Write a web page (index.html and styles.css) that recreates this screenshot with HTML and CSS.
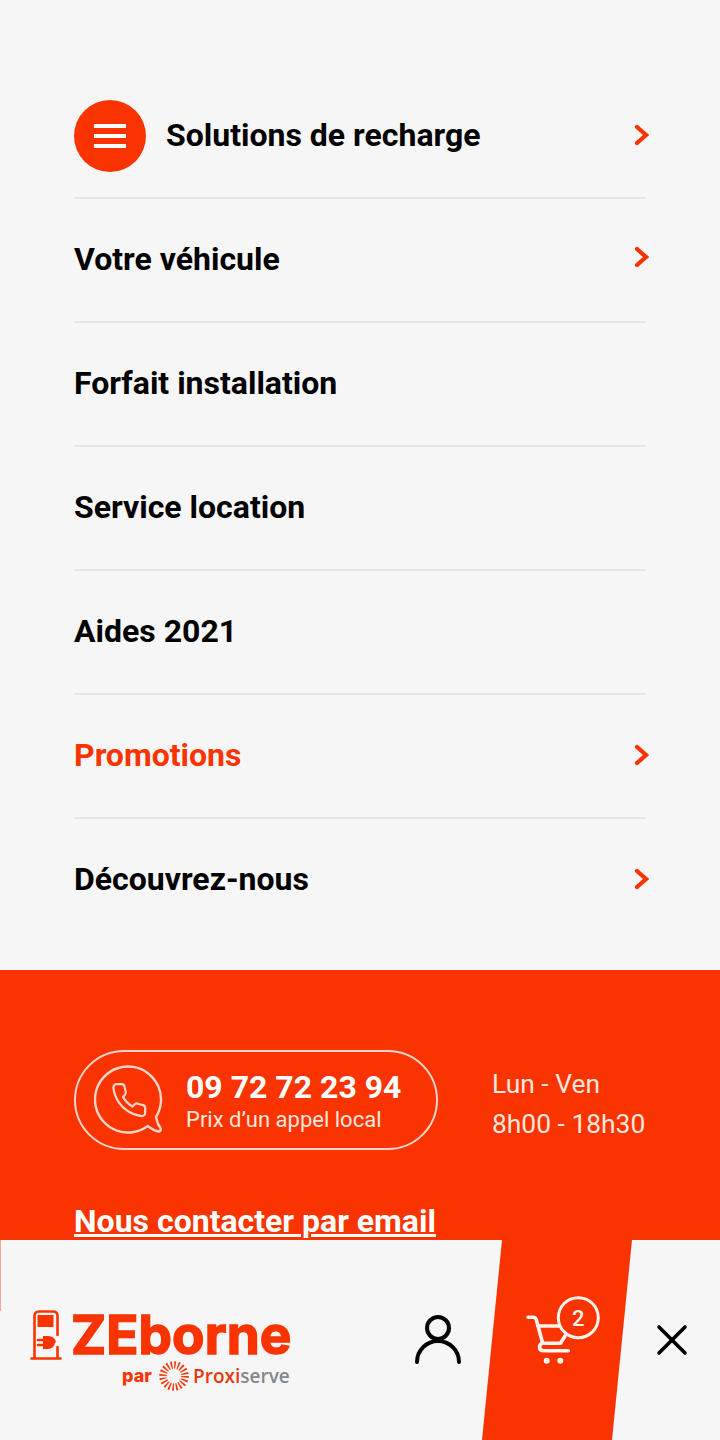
FILE: index.html
```html
<!DOCTYPE html>
<html lang="fr">
<head>
    <meta charset="UTF-8">
    <meta name="viewport" content="width=device-width, initial-scale=1.0">
    <title>ZEborne - Menu</title>
    <link rel="stylesheet" href="styles.css">
</head>
<body>
    <nav class="menu">
        <a href="#" class="menu-row">
            <span class="burger"><i></i><i></i><i></i></span>
            <span class="menu-label">Solutions de recharge</span>
            <svg class="chevron" viewBox="0 0 16 22"><path d="M4 3l9 8-9 8"/></svg>
        </a>
        <a href="#" class="menu-row">
            <span class="menu-label">Votre véhicule</span>
            <svg class="chevron chevron-up" viewBox="0 0 16 22"><path d="M4 3l9 8-9 8"/></svg>
        </a>
        <a href="#" class="menu-row"><span class="menu-label">Forfait installation</span></a>
        <a href="#" class="menu-row"><span class="menu-label">Service location</span></a>
        <a href="#" class="menu-row"><span class="menu-label">Aides 2021</span></a>
        <a href="#" class="menu-row promo">
            <span class="menu-label">Promotions</span>
            <svg class="chevron" viewBox="0 0 16 22"><path d="M4 3l9 8-9 8"/></svg>
        </a>
        <a href="#" class="menu-row">
            <span class="menu-label">Découvrez-nous</span>
            <svg class="chevron" viewBox="0 0 16 22"><path d="M4 3l9 8-9 8"/></svg>
        </a>
    </nav>

    <section class="contact">
        <div class="contact-top">
            <a href="#" class="phone-pill">
                <svg class="phone-icon" viewBox="0 0 70 70">
                    <path d="M53.700 61A33 33 0 1 1 62 52L64 59Q69 66 65 66.500Q60 66 53.700 61z"/>
                    <path transform="translate(16 16) scale(1.6)" stroke-width="1.4" d="M22 16.920v3a2 2 0 0 1-2.180 2 19.790 19.790 0 0 1-8.630-3.070 19.500 19.500 0 0 1-6-6 19.790 19.790 0 0 1-3.070-8.670A2 2 0 0 1 4.110 2h3a2 2 0 0 1 2 1.720 12.840 12.840 0 0 0 .7 2.810 2 2 0 0 1-.45 2.110L8.090 9.910a16 16 0 0 0 6 6l1.270-1.270a2 2 0 0 1 2.110-.45 12.840 12.840 0 0 0 2.810.7A2 2 0 0 1 22 16.920z"/>
                </svg>
                <span class="phone-text">
                    <strong>09 72 72 23 94</strong>
                    <small>Prix d’un appel local</small>
                </span>
            </a>
            <p class="hours">Lun - Ven<br>8h00 - 18h30</p>
        </div>
        <a href="#" class="mail-link">Nous contacter par email</a>
    </section>

    <footer class="bottom-bar">
        <a href="#" class="logo">
            <span class="logo-main">
                <svg class="logo-station" viewBox="0 0 32 50">
                    <path class="station-line" d="M1.500 48.500h29M4.500 48V6q0-4.500 4.500-4.500h14q4.500 0 4.500 4.500v19M27.500 37v11"/>
                    <rect class="station-fill" x="7.500" y="5" width="16" height="12"/>
                    <path class="station-line" d="M8 30h6M8 35h6"/>
                    <path class="station-fill" d="M13 26h5q7 0 8 6.500h-1q-1 6.500-7 6.500h-5z"/>
                </svg>
                <span class="logo-name">ZEborne</span>
            </span>
            <span class="logo-sub">
                <span class="logo-par">par</span>
                <svg class="logo-sun" viewBox="0 0 30 30"><circle cx="15" cy="15" r="11" /></svg>
                <span class="logo-proxi">Proxi<em>serve</em></span>
            </span>
        </a>
        <a href="#" class="bar-user">
            <svg viewBox="0 0 48 50"><circle cx="24" cy="13" r="11"/><path d="M3 47a21 21 0 0 1 42 0"/></svg>
        </a>
        <a href="#" class="bar-cart">
            <svg viewBox="0 0 76 70">
                <path d="M2 21.300h5q2.500 0 3.300 2.500L16.700 47.300H34.500L39 40M11.700 30H33M18 54.700H42.300M18 54.700q-4.500 0-4.500-3.500t3.200-3.900"/>
                <circle class="wheel" cx="20.700" cy="64.700" r="3"/>
                <circle class="wheel" cx="34.300" cy="64.700" r="3"/>
                <circle class="cart-badge" cx="52.300" cy="21.700" r="20"/>
                <text x="52.300" y="29.500" text-anchor="middle">2</text>
            </svg>
        </a>
        <a href="#" class="bar-close">
            <svg viewBox="0 0 32 32"><path d="M3 3l26 26M29 3L3 29"/></svg>
        </a>
    </footer>
</body>
</html>
```

FILE: styles.css
```css
* {
    box-sizing: border-box;
}

html, body {
    margin: 0;
    height: 1440px;
    overflow: hidden;
}

body {
    background: #f6f6f6;
    font-family: 'Roboto', sans-serif;
    color: #000;
    display: flex;
    flex-direction: column;
}

a {
    color: inherit;
    text-decoration: none;
}

/* Menu */
.menu {
    padding: 75px 74px 27px;
}

.menu-row {
    display: flex;
    align-items: center;
    height: 124px;
    border-bottom: 2px solid #e5e5e5;
}

.menu-row:last-child {
    border-bottom-color: transparent;
}

.menu-label {
    padding-bottom: 2px;
    font-size: 32px;
    font-weight: 700;
    line-height: 36px;
}

.promo {
    color: #f93400;
}

.burger {
    width: 72px;
    height: 72px;
    margin-right: 20px;
    border-radius: 50%;
    background: #f93400;
    display: flex;
    flex-direction: column;
    align-items: center;
    justify-content: center;
    gap: 6px;
}

.burger i {
    width: 32px;
    height: 4px;
    background: #fff;
}

.chevron {
    width: 16px;
    height: 22px;
    margin-left: auto;
    margin-right: -3px;
    margin-bottom: 2px;
    fill: none;
    stroke: #f93400;
    stroke-width: 4.200;
    stroke-linecap: round;
    stroke-linejoin: miter;
}

.chevron-up {
    margin-bottom: 6px;
}

/* Contact band */
.contact {
    height: 270px;
    padding: 80px 0 0 74px;
    background: #f93400;
    color: #fff;
}

.contact-top {
    display: flex;
    align-items: center;
}

.phone-pill {
    width: 364px;
    height: 100px;
    padding-left: 18px;
    border: 2px solid #ffd5c7;
    border-radius: 50px;
    display: flex;
    align-items: center;
    gap: 22px;
}

.phone-icon {
    width: 70px;
    height: 70px;
    fill: none;
    stroke: #ffd5c7;
    stroke-width: 2.400;
    stroke-linejoin: round;
}

.phone-text {
    display: flex;
    flex-direction: column;
    padding-top: 4px;
}

.phone-text strong {
    font-size: 32px;
    font-weight: 700;
    line-height: 36px;
}

.phone-text small {
    font-size: 22px;
    line-height: 30px;
    color: #ffe6dd;
}

.hours {
    margin: 0 0 0 54px;
    padding-top: 8px;
    font-size: 26.400px;
    line-height: 40px;
    color: #ffe6dd;
}

.mail-link {
    display: inline-block;
    margin-top: 53px;
    font-size: 32px;
    font-weight: 700;
    line-height: 36px;
    text-decoration: underline;
}

/* Bottom bar */
.bottom-bar {
    position: relative;
    height: 200px;
    display: flex;
    align-items: center;
    padding-left: 30px;
    background: #f6f6f6;
}

.bottom-bar::before {
    content: '';
    position: absolute;
    left: 0;
    top: 0;
    width: 1px;
    height: 71px;
    background: #f9a58e;
}

.logo {
    width: 384px;
    padding-top: 21px;
    display: flex;
    flex-direction: column;
}

.logo-main {
    display: flex;
    align-items: flex-end;
    gap: 9px;
}

.logo-station {
    width: 32px;
    height: 50px;
}

.station-line {
    fill: none;
    stroke: #f93400;
    stroke-width: 2.600;
    stroke-linecap: round;
}

.station-fill {
    fill: #f93400;
}

.logo-name {
    font-family: 'Inter', sans-serif;
    font-size: 53px;
    font-weight: 700;
    line-height: 50px;
    letter-spacing: 0.1px;
    color: #f93400;
    -webkit-text-stroke: 1.500px #f93400;
}

.logo-sub {
    display: flex;
    align-items: center;
    height: 32px;
    padding-left: 92px;
}

.logo-par {
    font-family: 'Inter', sans-serif;
    font-size: 18px;
    font-weight: 800;
    color: #f93400;
    width: 37px;
}

.logo-sun {
    width: 30px;
    height: 30px;
    margin-right: 4px;
    fill: none;
    stroke: #f93400;
    stroke-width: 7.500;
    stroke-dasharray: 1.500 1.950;
}

.logo-proxi {
    font-family: 'Open Sans', sans-serif;
    font-size: 19px;
    font-weight: 600;
    color: #e8380c;
}

.logo-proxi em {
    font-style: normal;
    color: #84878c;
}

.bar-user {
    width: 48px;
    height: 50px;
    margin-right: 20px;
}

.bar-user svg {
    display: block;
    width: 48px;
    height: 50px;
    fill: none;
    stroke: #000;
    stroke-width: 4;
    stroke-linecap: round;
}

.bar-cart {
    width: 150px;
    height: 200px;
    padding: 56px 30px 0 44px;
    background: #f93400;
    clip-path: polygon(20px 0, 150px 0, 130px 100%, 0 100%);
}

.bar-cart svg {
    display: block;
    width: 76px;
    height: 70px;
    fill: none;
    stroke: #fff3ee;
    stroke-width: 3.600;
    stroke-linecap: round;
    stroke-linejoin: round;
}

.bar-cart .wheel {
    fill: #fff3ee;
    stroke: none;
}

.bar-cart .cart-badge {
    fill: #f93400;
    stroke-width: 3;
}

.bar-cart text {
    font-family: 'Roboto', sans-serif;
    font-size: 22px;
    font-weight: 500;
    fill: #fff3ee;
    stroke: none;
}

.bar-close {
    width: 80px;
    display: flex;
    justify-content: center;
}

.bar-close svg {
    width: 32px;
    height: 32px;
    fill: none;
    stroke: #000;
    stroke-width: 3.600;
    stroke-linecap: round;
}
```
